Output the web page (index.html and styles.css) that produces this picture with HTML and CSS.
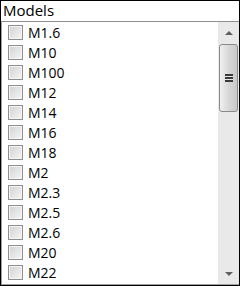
FILE: index.html
```html
<!DOCTYPE html>
<html>
<head>
    <link rel="stylesheet" href="styles.css">
</head>
<body>
    <div class="panel">
        <div class="title">Models</div>
        <div class="listbox">
            <div class="items">
                <div class="row"><span class="check"></span>M1.6</div>
                <div class="row"><span class="check"></span>M10</div>
                <div class="row"><span class="check"></span>M100</div>
                <div class="row"><span class="check"></span>M12</div>
                <div class="row"><span class="check"></span>M14</div>
                <div class="row"><span class="check"></span>M16</div>
                <div class="row"><span class="check"></span>M18</div>
                <div class="row"><span class="check"></span>M2</div>
                <div class="row"><span class="check"></span>M2.3</div>
                <div class="row"><span class="check"></span>M2.5</div>
                <div class="row"><span class="check"></span>M2.6</div>
                <div class="row"><span class="check"></span>M20</div>
                <div class="row"><span class="check"></span>M22</div>
            </div>
            <div class="scrollbar">
                <div class="arrow up"></div>
                <div class="track">
                    <div class="thumb"><span class="grip"></span></div>
                </div>
                <div class="arrow down"></div>
            </div>
        </div>
    </div>
</body>
</html>
```

FILE: styles.css
```css
/*Page frame.*/
body {
    margin: 0;
    font-family: "Open Sans", "Noto Sans", sans-serif;
    color: #000000;
}

.panel {
    width: 240px;
    height: 286px;
    box-sizing: border-box;
    border: 1px black solid;
    display: flex;
    flex-direction: column;
    background-color: #ffffff;
}

.title {
    height: 20px;
    line-height: 19px;
    font-size: 15px;
    padding-left: 2px;
}

/*List with checkboxes.*/
.listbox {
    flex: 1;
    display: flex;
    border-top: 1px #8f8f8f solid;
    border-left: 1px #a0a0a0 solid;
    border-bottom: 1px #a0a0a0 solid;
    overflow: hidden;
}

.items {
    flex: 1;
    overflow: hidden;
}

.row {
    height: 20px;
    display: flex;
    align-items: center;
    font-size: 14px;
}

.check {
    width: 13px;
    height: 13px;
    margin-left: 6px;
    margin-right: 5px;
    border: 1px #8e8f8f solid;
    box-shadow: inset 0 0 0 1px #f4f4f4;
    background: linear-gradient(135deg, #d2d2d2, #f6f6f6);
}

/*Scrollbar.*/
.scrollbar {
    width: 21px;
    display: flex;
    flex-direction: column;
    background-color: #e9e9e9;
}

.arrow {
    height: 21px;
    display: flex;
    align-items: center;
    justify-content: center;
}

.arrow::after {
    content: "";
    border-left: 4px transparent solid;
    border-right: 4px transparent solid;
}

.up::after {
    border-bottom: 4px #606060 solid;
}

.down::after {
    border-top: 4px #606060 solid;
}

.track {
    flex: 1;
}

.thumb {
    height: 66px;
    margin: 1px 1px 0 1px;
    border: 1px #8a8a8a solid;
    border-radius: 3px;
    background: linear-gradient(90deg, #f0f0f0, #d8d8d8 50%, #c9c9c9);
    display: flex;
    align-items: center;
    justify-content: center;
}

.grip {
    width: 8px;
    height: 8px;
    background: repeating-linear-gradient(180deg, #3a3a3a 0, #3a3a3a 2px, #e8e8e8 2px, #e8e8e8 3px);
}
```
